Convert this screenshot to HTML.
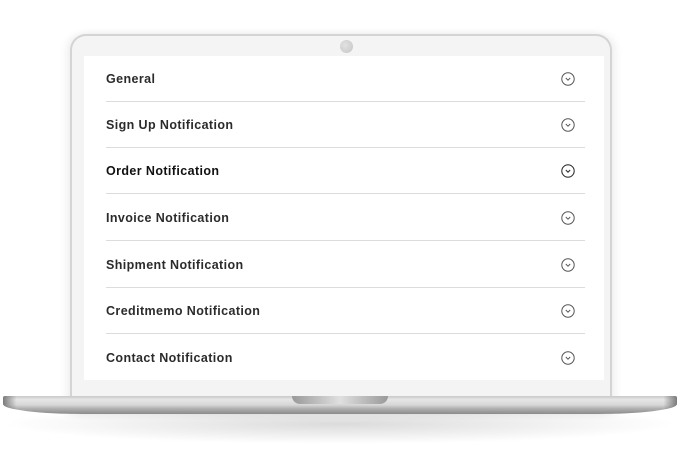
<!DOCTYPE html>
<html><head><meta charset="utf-8"><style>
body{margin:0;width:680px;height:450px;background:#fff;position:relative;overflow:hidden;font-family:"Liberation Sans",sans-serif}
.lid{position:absolute;left:70px;top:34px;width:542px;height:380px;background:#f4f4f4;border:2px solid #d4d4d4;border-bottom:none;border-radius:16px 16px 0 0;box-sizing:border-box;box-shadow:-4px 0 8px rgba(0,0,0,.06),4px 0 8px rgba(0,0,0,.06)}
.cam{position:absolute;left:340px;top:40px;width:13px;height:13px;border-radius:50%;background:radial-gradient(circle at 40% 40%,#e2e2e2,#c4c4c4)}
.screen{position:absolute;left:84px;top:56px;width:520px;height:324px;background:#fff}
.row{position:absolute;left:106px;width:479px;height:46px;border-bottom:1px solid #dcdcdc;box-sizing:border-box}
.row span{position:absolute;left:0;top:50%;transform:translateY(-50%);font-size:12.5px;font-weight:600;color:#2b2b2b;letter-spacing:.4px}
.row svg{position:absolute;left:455px;top:50%;margin-top:-7px}
.base{position:absolute;left:3px;top:396px;width:674px;height:18px;border-radius:2px 2px 80px 80px/2px 2px 10px 10px;background:linear-gradient(#c8c8c8 0,#e6e6e6 20%,#d6d6d6 50%,#b0b0b0 70%,#8a8a8a 100%)}
.base:before{content:"";position:absolute;left:0;top:0;width:100%;height:100%;border-radius:inherit;background:linear-gradient(90deg,#7a7a7a 0,transparent 2%,transparent 98%,#7a7a7a 100%)}
.notch{position:absolute;left:292px;top:396px;width:96px;height:8px;border-radius:0 0 8px 8px;background:linear-gradient(90deg,#999,#e0e0e0 50%,#999)}
.shadow{position:absolute;left:0;top:404px;width:680px;height:40px;border-radius:50%;background:radial-gradient(ellipse at center,rgba(0,0,0,.14),transparent 70%)}
</style></head><body>
<div class="shadow"></div>
<div class="lid"></div>
<div class="cam"></div>
<div class="screen"></div>
<div class="row" style="top:56px"><span>General</span><svg width="14" height="14" viewBox="0 0 14 14"><circle cx="7" cy="7" r="6.2" fill="none" stroke="#555" stroke-width="1"/><path d="M4.8 6 7 8.2 9.2 6" fill="none" stroke="#555" stroke-width="1"/></svg></div>
<div class="row" style="top:102px"><span>Sign Up Notification</span><svg width="14" height="14" viewBox="0 0 14 14"><circle cx="7" cy="7" r="6.2" fill="none" stroke="#555" stroke-width="1"/><path d="M4.8 6 7 8.2 9.2 6" fill="none" stroke="#555" stroke-width="1"/></svg></div>
<div class="row" style="top:148px"><span style="color:#111">Order Notification</span><svg width="14" height="14" viewBox="0 0 14 14"><circle cx="7" cy="7" r="6.2" fill="none" stroke="#333" stroke-width="1.1"/><path d="M4.8 6 7 8.2 9.2 6" fill="none" stroke="#333" stroke-width="1.1"/></svg></div>
<div class="row" style="top:195px"><span>Invoice Notification</span><svg width="14" height="14" viewBox="0 0 14 14"><circle cx="7" cy="7" r="6.2" fill="none" stroke="#555" stroke-width="1"/><path d="M4.8 6 7 8.2 9.2 6" fill="none" stroke="#555" stroke-width="1"/></svg></div>
<div class="row" style="top:242px"><span>Shipment Notification</span><svg width="14" height="14" viewBox="0 0 14 14"><circle cx="7" cy="7" r="6.2" fill="none" stroke="#555" stroke-width="1"/><path d="M4.8 6 7 8.2 9.2 6" fill="none" stroke="#555" stroke-width="1"/></svg></div>
<div class="row" style="top:288px"><span>Creditmemo Notification</span><svg width="14" height="14" viewBox="0 0 14 14"><circle cx="7" cy="7" r="6.2" fill="none" stroke="#555" stroke-width="1"/><path d="M4.8 6 7 8.2 9.2 6" fill="none" stroke="#555" stroke-width="1"/></svg></div>
<div class="row" style="top:335px;border-bottom:none"><span>Contact Notification</span><svg width="14" height="14" viewBox="0 0 14 14"><circle cx="7" cy="7" r="6.2" fill="none" stroke="#555" stroke-width="1"/><path d="M4.8 6 7 8.2 9.2 6" fill="none" stroke="#555" stroke-width="1"/></svg></div>
<div class="base"></div>
<div class="notch"></div>
</body></html>
